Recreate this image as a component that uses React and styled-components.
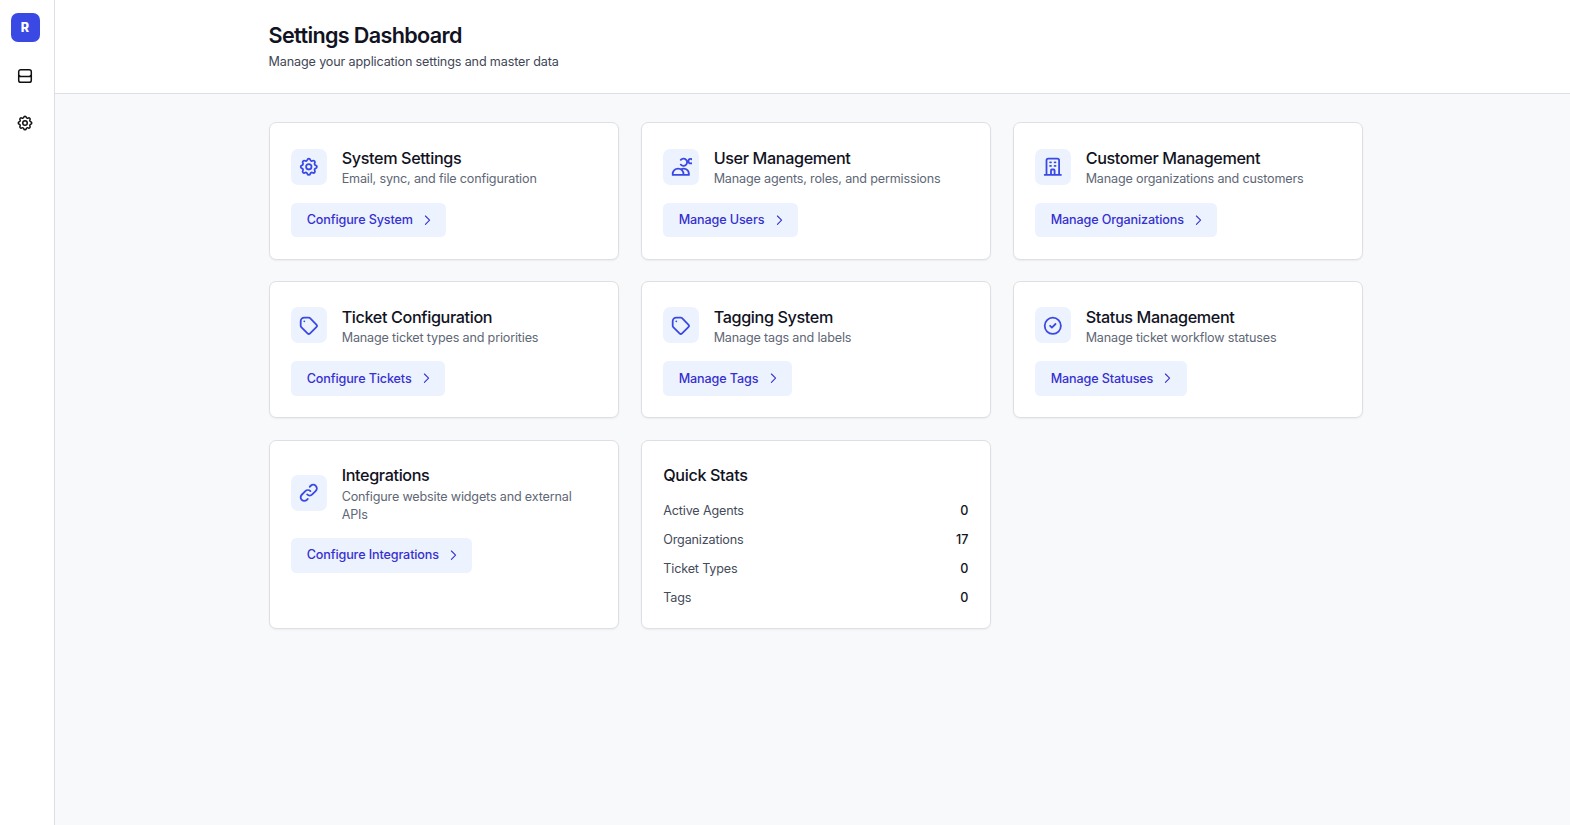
import React from "react";
import styled, { createGlobalStyle } from "styled-components";

const GlobalStyle = createGlobalStyle`
  *, *::before, *::after { box-sizing: border-box; }
  body {
    margin: 0;
    background: #f8f9fb;
    font-family: Inter, "Liberation Sans", sans-serif;
    font-size: 14.4px;
    color: #111322;
  }
  h1, h2, p, dl, dd, dt { margin: 0; }
`;

const Shell = styled.div`
  display: flex;
  min-height: 825px;
`;

const Sidebar = styled.nav`
  flex: none;
  width: 55px;
  padding: 13px 4px 0 0;
  display: flex;
  flex-direction: column;
  align-items: center;
  background: #fff;
  border-right: 1px solid #dddfe4;
`;

const Logo = styled.div`
  width: 29px;
  height: 29px;
  margin-bottom: 10px;
  display: flex;
  align-items: center;
  justify-content: center;
  border-radius: 7px;
  background: #3b49e4;
  color: #fff;
  font-size: 12.6px;
  font-weight: 800;
`;

const NavItem = styled.a`
  width: 36px;
  height: 47px;
  display: flex;
  align-items: center;
  justify-content: center;
  color: #111;
`;

const Main = styled.main`
  flex: 1;
  min-width: 0;
`;

const Header = styled.header`
  height: 94px;
  padding: 21px 0 0 213.6px;
  background: #fff;
  border-bottom: 1px solid #dddfe4;
`;

const PageTitle = styled.h1`
  font-size: 21.6px;
  line-height: 28.8px;
  font-weight: 620;
  letter-spacing: -0.65px;
`;

const PageText = styled.p`
  margin-top: 3px;
  font-size: 12.6px;
  line-height: 18px;
  letter-spacing: -0.14px;
  color: #3f4756;
`;

const Grid = styled.div`
  width: 1094.4px;
  margin: 28.45px 0 0 213.7px;
  display: grid;
  grid-template-columns: repeat(3, 1fr);
  gap: 21.6px;
`;

const Card = styled.section`
  padding: 21.6px;
  background: #fff;
  border: 1px solid #dddfe5;
  border-radius: 7.2px;
  box-shadow: 0 1px 2px rgba(0, 0, 0, 0.05);
`;

const CardHead = styled.div`
  display: flex;
  align-items: center;
  gap: 14.4px;
`;

const IconTile = styled.div`
  flex: none;
  width: 36px;
  height: 36px;
  display: flex;
  align-items: center;
  justify-content: center;
  border-radius: 7.2px;
  background: #ecf3fe;
  color: #3b49e4;
`;

const CardTitle = styled.h2`
  padding-top: 0.8px;
  font-size: 16.2px;
  line-height: 24.4px;
  font-weight: 500;
  letter-spacing: -0.37px;
`;

const CardText = styled.p`
  font-size: 12.6px;
  line-height: 18px;
  letter-spacing: -0.17px;
  color: #606776;
`;

const Action = styled.a`
  display: inline-flex;
  align-items: center;
  margin-top: 14.4px;
  padding: 7.2px 14.4px;
  border: 1px solid transparent;
  border-radius: 5.4px;
  background: #ecf3fe;
  color: #3730d0;
  font-size: 12.6px;
  line-height: 18px;
  font-weight: 550;
  letter-spacing: -0.12px;
  vertical-align: top;
  svg { margin: 0 -3.6px 0 7.2px; stroke-width: 1.8; }
`;

const Stats = styled.dl`
  margin-top: 14.4px;
  display: flex;
  flex-direction: column;
  gap: 10.8px;
`;

const Stat = styled.div`
  display: flex;
  justify-content: space-between;
  font-size: 12.6px;
  line-height: 18px;
  dt { color: #444b5a; letter-spacing: -0.16px; }
  dd { font-weight: 550; }
`;

const Svg = styled.svg`
  display: block;
  flex: none;
  overflow: hidden;
  fill: none;
  stroke: currentColor;
  stroke-width: 2;
  stroke-linecap: round;
  stroke-linejoin: round;
`;

const paths = {
  gear: "M10.325 4.317c.426-1.756 2.924-1.756 3.35 0a1.724 1.724 0 002.573 1.066c1.543-.94 3.31.826 2.37 2.37a1.724 1.724 0 001.065 2.572c1.756.426 1.756 2.924 0 3.35a1.724 1.724 0 00-1.066 2.573c.94 1.543-.826 3.31-2.37 2.37a1.724 1.724 0 00-2.572 1.065c-.426 1.756-2.924 1.756-3.35 0a1.724 1.724 0 00-2.573-1.066c-1.543.94-3.31-.826-2.37-2.37a1.724 1.724 0 00-1.065-2.572c-1.756-.426-1.756-2.924 0-3.35a1.724 1.724 0 001.066-2.573c-.94-1.543.826-3.31 2.37-2.37.996.608 2.296.07 2.572-1.065z M15 12a3 3 0 11-6 0 3 3 0 016 0z",
  users: "M12 4.354a4 4 0 110 5.292M15 21H3v-1a6 6 0 0112 0v1zm0 0h6v-1a6 6 0 00-9-5.197m13.5-9a2.5 2.5 0 11-5 0 2.5 2.5 0 015 0z",
  building: "M19 21V5a2 2 0 00-2-2H7a2 2 0 00-2 2v16m14 0h2m-2 0h-5m-9 0H3m2 0h5M9 7h1m-1 4h1m4-4h1m-1 4h1m-5 10v-5a1 1 0 011-1h2a1 1 0 011 1v5m-4 0h4",
  tag: "M7 7h.01M7 3h5c.512 0 1.024.195 1.414.586l7 7a2 2 0 010 2.828l-7 7a2 2 0 01-2.828 0l-7-7A1.994 1.994 0 013 12V7a4 4 0 014-4z",
  check: "M9 12l2 2 4-4m6 2a9 9 0 11-18 0 9 9 0 0118 0z",
  link: "M13.828 10.172a4 4 0 00-5.656 0l-4 4a4 4 0 105.656 5.656l1.102-1.101m-.758-4.899a4 4 0 005.656 0l4-4a4 4 0 00-5.656-5.656l-1.1 1.1",
  inbox: "M4 11l2 1.8h12l2-1.8M4 12.8h16M3.6 6.4a2.8 2.8 0 012.8-2.8h11.2a2.8 2.8 0 012.8 2.8v11.2a2.8 2.8 0 01-2.8 2.8H6.4a2.8 2.8 0 01-2.8-2.8z",
  chevron: "M9 5l7 7-7 7",
};

const Icon = ({ name, size = 21.6 }) => (
  <Svg width={size} height={size} viewBox="0 0 24 24" aria-hidden="true">
    <path d={paths[name]} />
  </Svg>
);

const sections = [
  ["gear", "System Settings", "Email, sync, and file configuration", "Configure System"],
  ["users", "User Management", "Manage agents, roles, and permissions", "Manage Users"],
  ["building", "Customer Management", "Manage organizations and customers", "Manage Organizations"],
  ["tag", "Ticket Configuration", "Manage ticket types and priorities", "Configure Tickets"],
  ["tag", "Tagging System", "Manage tags and labels", "Manage Tags"],
  ["check", "Status Management", "Manage ticket workflow statuses", "Manage Statuses"],
  ["link", "Integrations", "Configure website widgets and external APIs", "Configure Integrations"],
];

const stats = [
  ["Active Agents", 0],
  ["Organizations", 17],
  ["Ticket Types", 0],
  ["Tags", 0],
];

export default function App() {
  return (
    <Shell>
      <GlobalStyle />
      <Sidebar>
        <Logo>R</Logo>
        <NavItem><Icon name="inbox" size={18} /></NavItem>
        <NavItem><Icon name="gear" size={18} /></NavItem>
      </Sidebar>
      <Main>
        <Header>
          <PageTitle>Settings Dashboard</PageTitle>
          <PageText>Manage your application settings and master data</PageText>
        </Header>
        <Grid>
          {sections.map(([icon, title, text, action]) => (
            <Card key={title}>
              <CardHead>
                <IconTile><Icon name={icon} /></IconTile>
                <div>
                  <CardTitle>{title}</CardTitle>
                  <CardText>{text}</CardText>
                </div>
              </CardHead>
              <Action>
                {action}
                <Icon name="chevron" size={14.4} />
              </Action>
            </Card>
          ))}
          <Card>
            <CardTitle>Quick Stats</CardTitle>
            <Stats>
              {stats.map(([label, value]) => (
                <Stat key={label}>
                  <dt>{label}</dt>
                  <dd>{value}</dd>
                </Stat>
              ))}
            </Stats>
          </Card>
        </Grid>
      </Main>
    </Shell>
  );
}
